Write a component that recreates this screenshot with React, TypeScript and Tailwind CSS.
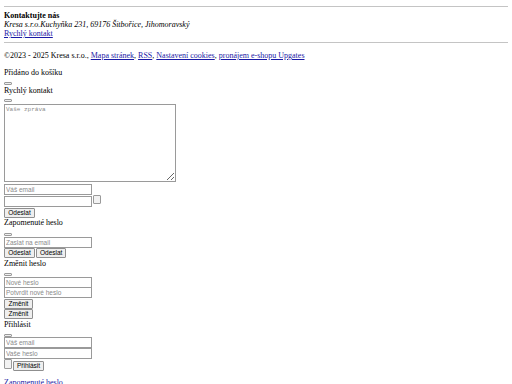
import React from 'react';

const serif = "font-['Liberation_Serif','Times_New_Roman',serif]";
const sans = "font-['Liberation_Sans',Arial,sans-serif]";
const link = 'text-[#1a1aa6] underline';

function TinyButton({ className = '' }: { className?: string }) {
  return (
    <button
      type="button"
      className={`block w-[8px] h-[3px] border border-[#9a9a9a] bg-[#efefef] rounded-[1px] ${className}`}
    />
  );
}

function Field({ placeholder = '', className = '' }: { placeholder?: string; className?: string }) {
  return (
    <input
      placeholder={placeholder}
      className={`block w-[88px] h-[11px] border border-[#9a9a9a] bg-white px-[1px] text-[6.5px] leading-[9px] ${sans} text-black placeholder:text-[#8a8a8a] outline-none ${className}`}
    />
  );
}

function Btn({ label, className = '' }: { label: string; className?: string }) {
  return (
    <button
      type="button"
      className={`block h-[10px] px-[3px] border border-[#8f8f8f] bg-[#efefef] rounded-[1px] text-[6.5px] leading-[8px] ${sans} text-black ${className}`}
    >
      {label}
    </button>
  );
}

export default function App() {
  return (
    <div className={`w-[512px] h-[384px] overflow-hidden bg-white px-[4px] ${serif} text-[8px] leading-[9px] text-black`}>
      <hr className="mt-[6px] border-t border-[#c4c4c4]" />

      <div className="mt-[4px]">
        <div className="font-bold h-[9px]">Kontaktujte nás</div>
        <div className="italic h-[9px]">Kresa s.r.o.Kuchyňka 231, 69176 Šitbořice, Jihomoravský</div>
        <a href="#" className={`block h-[9px] w-fit ${link}`}>Rychlý kontakt</a>
      </div>

      <hr className="mt-[4px] border-t border-[#c4c4c4]" />

      <p className="mt-[8px] h-[9px]">
        ©2023 - 2025 Kresa s.r.o., <a href="#" className={link}>Mapa stránek</a>,{' '}
        <a href="#" className={link}>RSS</a>, <a href="#" className={link}>Nastavení cookies</a>,{' '}
        <a href="#" className={link}>pronájem e-shopu Upgates</a>
      </p>

      <p className="mt-[8px] h-[9px]">Přidáno do košíku</p>

      <TinyButton className="mt-[5px]" />
      <div className="mt-[1px] h-[9px]">Rychlý kontakt</div>
      <TinyButton className="mt-[4px]" />

      <textarea
        placeholder="Vaše zpráva"
        className="block mt-[2px] w-[172px] h-[78px] border border-[#9a9a9a] bg-white p-[1px] text-[6px] leading-[8px] font-['Liberation_Mono',monospace] placeholder:text-[#8a8a8a] resize-y outline-none"
      />

      <Field placeholder="Váš email" className="mt-[2px]" />
      <div className="flex items-start mt-[1px]">
        <Field />
        <span className="ml-[1px] -mt-[1px] block w-[8px] h-[9px] border border-[#9a9a9a] bg-[#f2f2f2] rounded-[1px]" />
      </div>
      <Btn label="Odeslat" className="mt-[1px] w-[31px]" />
      <div className="h-[9px]">Zapomenuté heslo</div>

      <TinyButton className="mt-[6px]" />
      <Field placeholder="Zaslat na email" className="mt-[1px]" />
      <div className="flex gap-[1px] mt-[0px]">
        <Btn label="Odeslat" className="w-[31px]" />
        <Btn label="Odeslat" className="w-[30px]" />
      </div>
      <div className="h-[9px] mt-[1px]">Změnit heslo</div>

      <TinyButton className="mt-[5px]" />
      <Field placeholder="Nové heslo" className="mt-[1px]" />
      <Field placeholder="Potvrdit nové heslo" className="mt-[-1px]" />
      <Btn label="Změnit" className="mt-[1px] w-[29px]" />
      <Btn label="Změnit" className="mt-[0px] w-[29px]" />
      <div className="h-[9px] mt-[1px]">Přihlásit</div>

      <TinyButton className="mt-[5px]" />
      <Field placeholder="Váš email" className="mt-[0px]" />
      <Field placeholder="Vaše heslo" className="mt-[0px]" />
      <div className="flex items-start">
        <span className="block w-[8px] h-[10px] border border-[#9a9a9a] bg-[#f2f2f2] rounded-[1px]" />
        <Btn label="Přihlásit" className="ml-[1px] mt-[2px] w-[31px]" />
      </div>

      <a href="#" className={`block mt-[7px] h-[9px] w-fit ${link}`}>Zapomenuté heslo</a>
    </div>
  );
}
